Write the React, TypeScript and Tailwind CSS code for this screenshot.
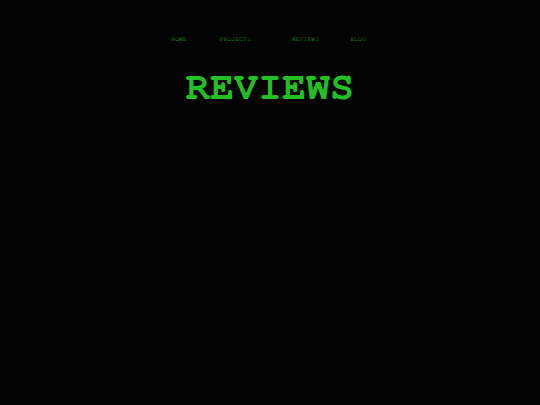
export default function App() {
  return (
    <div className="min-h-screen w-full bg-[#030303] font-['Nimbus_Mono_PS','FreeMono','Courier_10_Pitch','Liberation_Mono',monospace]">
      <nav className="flex items-center pt-[35px] text-[6.5px] leading-[8px] text-[#2bb02b]">
        <span className="ml-[171px]">HOME</span>
        <span className="ml-[33px]">PROJECTS</span>
        <span className="ml-[41px]">REVIEWS</span>
        <span className="ml-[31px]">BLOG</span>
      </nav>
      <h1 className="mt-[20px] text-center text-[40px] font-bold leading-[48px] text-[#22c022]">
        REVIEWS
      </h1>
    </div>
  );
}
